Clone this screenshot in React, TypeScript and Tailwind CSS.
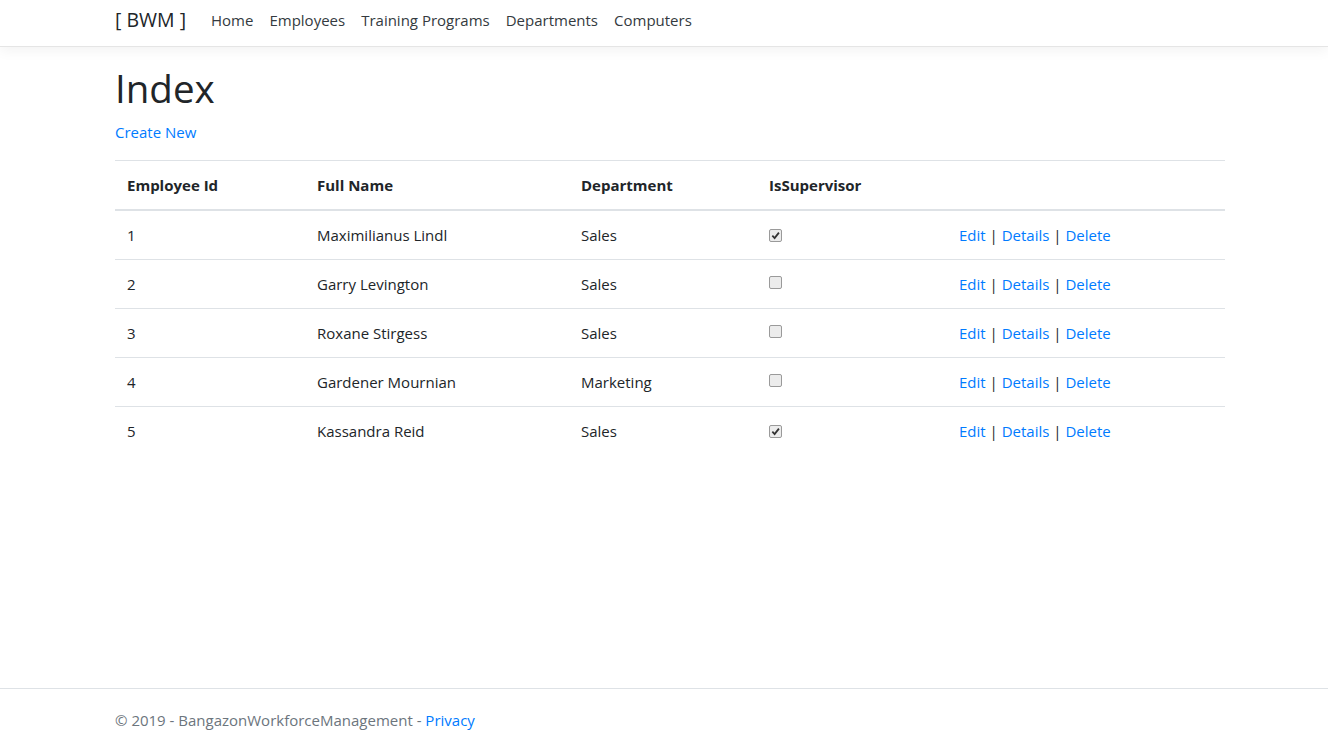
const employees = [
  { id: 1, name: "Maximilianus Lindl", dept: "Sales", sup: true },
  { id: 2, name: "Garry Levington", dept: "Sales", sup: false },
  { id: 3, name: "Roxane Stirgess", dept: "Sales", sup: false },
  { id: 4, name: "Gardener Mournian", dept: "Marketing", sup: false },
  { id: 5, name: "Kassandra Reid", dept: "Sales", sup: true },
];

function CheckBox({ checked }: { checked: boolean }) {
  return (
    <span className="inline-flex h-[13px] w-[13px] items-center justify-center rounded-[2px] border border-[#9a9a9a] bg-[#ececec] align-[1px]">
      {checked && (
        <svg viewBox="0 0 10 10" className="h-[9px] w-[9px]">
          <path d="M1.5 5.2 L4 7.8 L8.8 1.8" fill="none" stroke="#333" strokeWidth="2" />
        </svg>
      )}
    </span>
  );
}

function App() {
  return (
    <div className="flex min-h-screen flex-col bg-white font-['Open_Sans',sans-serif] text-[15px] text-[#212529]">
      <header className="h-[47px] border-b border-[#e5e5e5] bg-white shadow-[0_4px_12px_rgba(0,0,0,0.05)]">
        <nav className="ml-[115px] flex h-[39px] w-[1110px] items-center">
          <a className="mr-[17px] text-[19.5px] leading-[30px] text-[#212529]">[ BWM ]</a>
          <ul className="flex">
            {["Home", "Employees", "Training Programs", "Departments", "Computers"].map((l) => (
              <li key={l}>
                <a className="block px-2 leading-6 text-[#343a40]">{l}</a>
              </li>
            ))}
          </ul>
        </nav>
      </header>

      <main className="ml-[115px] w-[1110px] pt-[17px]">
        <h1 className="mb-2 text-[38.5px] font-medium leading-[48px]">Index</h1>
        <p className="mb-4 leading-6">
          <a className="text-[#007bff]">Create New</a>
        </p>
        <table className="w-full table-fixed border-collapse">
          <thead>
            <tr className="border-t border-b-2 border-[#dee2e6]">
              <th className="w-[190px] p-3 text-left font-bold leading-6">Employee Id</th>
              <th className="w-[264px] p-3 text-left font-bold leading-6">Full Name</th>
              <th className="w-[188px] p-3 text-left font-bold leading-6">Department</th>
              <th className="w-[190px] p-3 text-left font-bold leading-6">IsSupervisor</th>
              <th className="p-3"></th>
            </tr>
          </thead>
          <tbody>
            {employees.map((e) => (
              <tr key={e.id} className="border-t border-[#dee2e6] first:border-t-0">
                <td className="p-3 leading-6">{e.id}</td>
                <td className="p-3 leading-6">{e.name}</td>
                <td className="p-3 leading-6">{e.dept}</td>
                <td className="p-3 leading-6">
                  <CheckBox checked={e.sup} />
                </td>
                <td className="p-3 leading-6">
                  <a className="text-[#007bff]">Edit</a> | <a className="text-[#007bff]">Details</a> |{" "}
                  <a className="text-[#007bff]">Delete</a>
                </td>
              </tr>
            ))}
          </tbody>
        </table>
      </main>

      <footer className="mt-auto h-[55px] border-t border-[#dee2e6] pt-[19px]">
        <div className="ml-[115px] w-[1110px] leading-6 text-[#6c757d]">
          &copy; 2019 - BangazonWorkforceManagement - <a className="text-[#007bff]">Privacy</a>
        </div>
      </footer>
    </div>
  );
}

export default App;
